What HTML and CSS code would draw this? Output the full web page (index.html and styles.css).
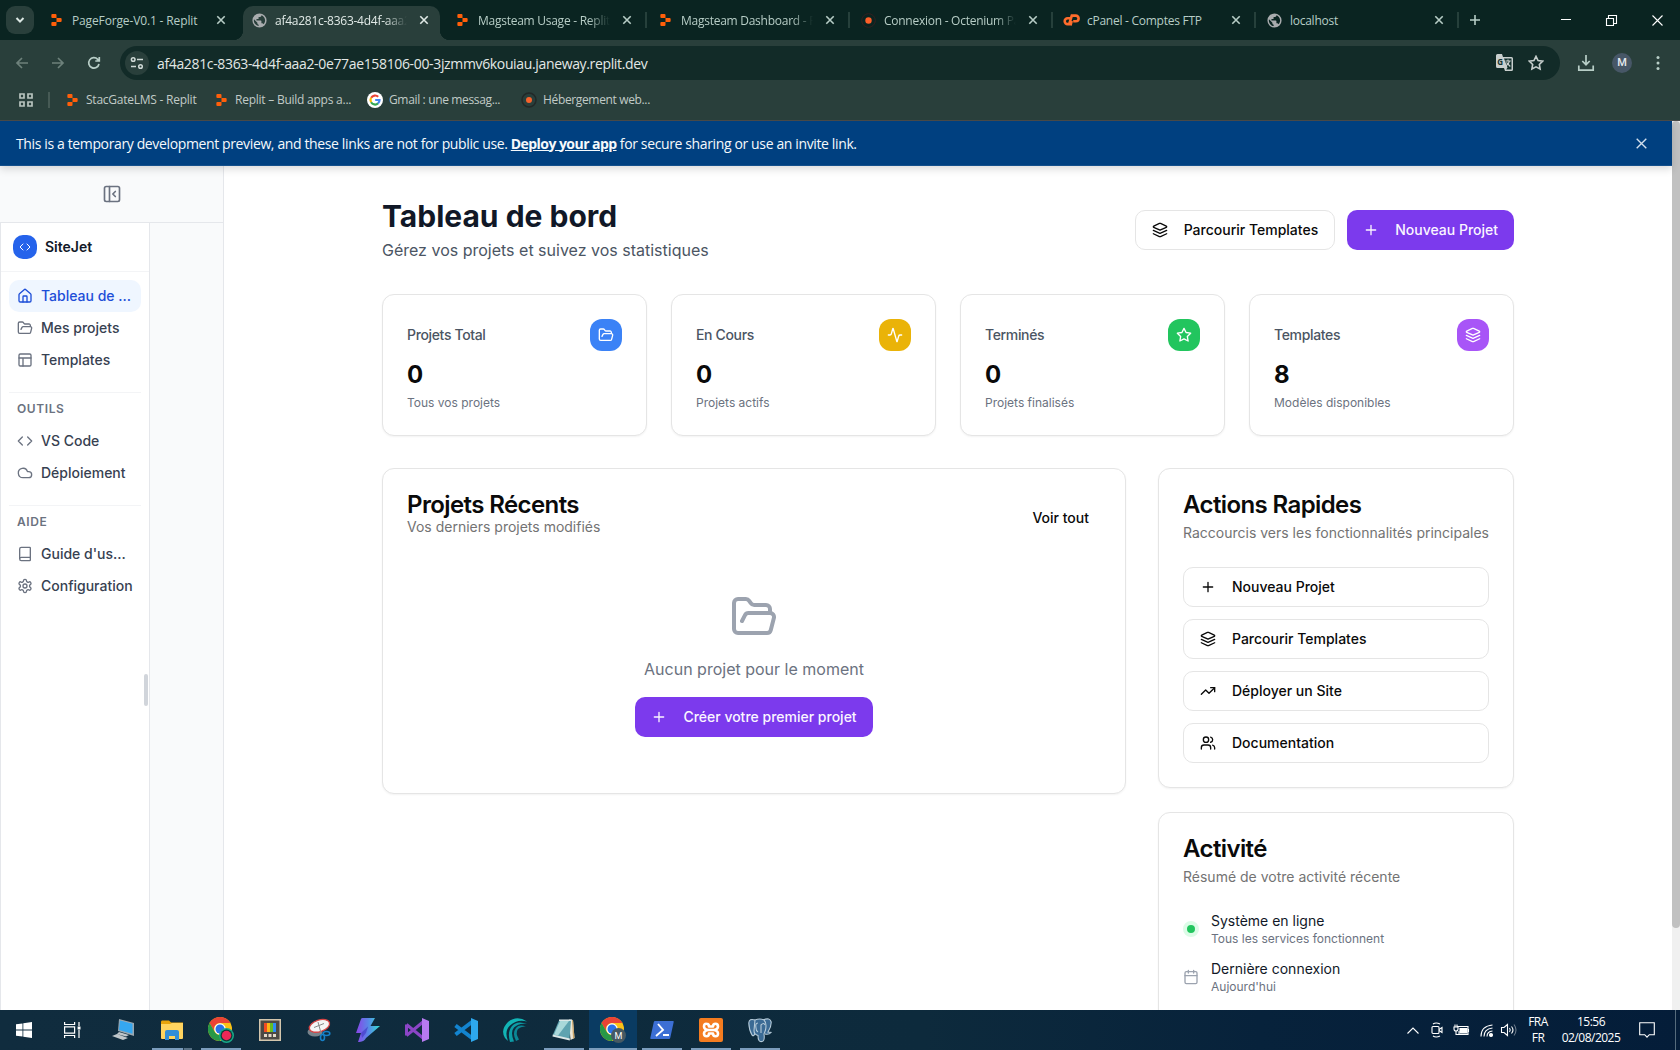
FILE: index.html
```html
<!DOCTYPE html>
<html lang="fr">
<head>
<meta charset="utf-8">
<title>SiteJet – Tableau de bord</title>
<link rel="stylesheet" href="styles.css">
</head>
<body>
<svg class="sprite" aria-hidden="true">
  <symbol id="replit" viewBox="0 0 12 14"><path fill="#ff5f0a" d="M1.2 0h3.6Q6 0 6 1.2V4.7H1.2Q0 4.700 0 3.500V1.200Q0 0 1.200 0zM6 4.700h4.800Q12 4.700 12 5.900V8.100Q12 9.300 10.800 9.300H6zM1.200 9.300H6v3.500Q6 14 4.800 14H1.200Q0 14 0 12.800v-2.300Q0 9.300 1.200 9.300z"/></symbol>
  <symbol id="globe" viewBox="0 0 24 24"><path fill="#a9acae" d="M12 2a10 10 0 1 0 0 20 10 10 0 0 0 0-20zm-1.200 17.900C7 19.300 4 16 4 12l.2-1.700L9 15v1c0 1.100.8 2 1.800 2zm6.800-2.500A2 2 0 0 0 15.700 16h-1v-3a1 1 0 0 0-1-1h-6v-2h2a1 1 0 0 0 1-1V7h2a2 2 0 0 0 2-2v-.4c3 1.200 5.200 4.100 5.200 7.400 0 2.100-.9 4-2.300 5.400z"/></symbol>
  <symbol id="x" viewBox="0 0 10 10"><path d="M1.300 1.300l7.400 7.400M8.700 1.300L1.300 8.700"/></symbol>
  <symbol id="plus" viewBox="0 0 24 24"><path d="M5 12h14M12 5v14"/></symbol>
  <symbol id="layers" viewBox="0 0 24 24"><path d="m12.830 2.180a2 2 0 0 0-1.660 0L2.600 6.080a1 1 0 0 0 0 1.830l8.580 3.910a2 2 0 0 0 1.660 0l8.580-3.900a1 1 0 0 0 0-1.830Z"/><path d="m22 17.650-9.170 4.160a2 2 0 0 1-1.660 0L2 17.650"/><path d="m22 12.650-9.170 4.160a2 2 0 0 1-1.660 0L2 12.650"/></symbol>
  <symbol id="folder" viewBox="0 0 24 24"><path d="m6 14 1.500-2.900A2 2 0 0 1 9.240 10H20a2 2 0 0 1 1.940 2.500l-1.540 6a2 2 0 0 1-1.950 1.500H4a2 2 0 0 1-2-2V5a2 2 0 0 1 2-2h3.900a2 2 0 0 1 1.690.9l.810 1.200a2 2 0 0 0 1.670.9H18a2 2 0 0 1 2 2v2"/></symbol>
  <symbol id="activity" viewBox="0 0 24 24"><path d="M22 12h-2.480a2 2 0 0 0-1.930 1.460l-2.350 8.360a.250.250 0 0 1-.480 0L9.240 2.180a.250.250 0 0 0-.480 0l-2.350 8.360A2 2 0 0 1 4.490 12H2"/></symbol>
  <symbol id="star" viewBox="0 0 24 24"><path d="M12 2l3.090 6.260L22 9.270l-5 4.870 1.180 6.880L12 17.770l-6.180 3.250L7 14.140 2 9.270l6.910-1.010z"/></symbol>
  <symbol id="trend" viewBox="0 0 24 24"><path d="M22 7l-8.500 8.500-5-5L2 17"/><path d="M16 7h6v6"/></symbol>
  <symbol id="users" viewBox="0 0 24 24"><path d="M16 21v-2a4 4 0 0 0-4-4H6a4 4 0 0 0-4 4v2"/><circle cx="9" cy="7" r="4"/><path d="M22 21v-2a4 4 0 0 0-3-3.870M16 3.130a4 4 0 0 1 0 7.750"/></symbol>
  <symbol id="calendar" viewBox="0 0 24 24"><path d="M8 2v4M16 2v4M3 10h18"/><rect x="3" y="4" width="18" height="18" rx="2"/></symbol>
  <symbol id="home" viewBox="0 0 24 24"><path d="M15 21v-8a1 1 0 0 0-1-1h-4a1 1 0 0 0-1 1v8"/><path d="M3 10a2 2 0 0 1 .709-1.528l7-5.999a2 2 0 0 1 2.582 0l7 5.999A2 2 0 0 1 21 10v9a2 2 0 0 1-2 2H5a2 2 0 0 1-2-2z"/></symbol>
  <symbol id="layout" viewBox="0 0 24 24"><rect x="3" y="3" width="18" height="18" rx="2"/><path d="M3 9h18M9 21V9"/></symbol>
  <symbol id="code" viewBox="0 0 24 24"><path d="m16 18 6-6-6-6M8 6l-6 6 6 6"/></symbol>
  <symbol id="cloud" viewBox="0 0 24 24"><path d="M17.500 19H9a7 7 0 1 1 6.710-9h1.790a4.500 4.500 0 1 1 0 9Z"/></symbol>
  <symbol id="book" viewBox="0 0 24 24"><path d="M4 19.500v-15A2.500 2.500 0 0 1 6.500 2H19a1 1 0 0 1 1 1v18a1 1 0 0 1-1 1H6.500a1 1 0 0 1 0-5H20"/></symbol>
  <symbol id="gear" viewBox="0 0 24 24"><path d="M12.220 2h-.440a2 2 0 0 0-2 2v.180a2 2 0 0 1-1 1.730l-.430.250a2 2 0 0 1-2 0l-.150-.080a2 2 0 0 0-2.730.730l-.220.380a2 2 0 0 0 .730 2.730l.150.100a2 2 0 0 1 1 1.720v.510a2 2 0 0 1-1 1.740l-.150.090a2 2 0 0 0-.730 2.730l.220.380a2 2 0 0 0 2.730.730l.150-.080a2 2 0 0 1 2 0l.430.250a2 2 0 0 1 1 1.730V20a2 2 0 0 0 2 2h.440a2 2 0 0 0 2-2v-.180a2 2 0 0 1 1-1.730l.430-.250a2 2 0 0 1 2 0l.150.080a2 2 0 0 0 2.730-.730l.220-.390a2 2 0 0 0-.730-2.730l-.150-.080a2 2 0 0 1-1-1.740v-.500a2 2 0 0 1 1-1.740l.150-.090a2 2 0 0 0 .730-2.730l-.220-.380a2 2 0 0 0-2.730-.730l-.150.080a2 2 0 0 1-2 0l-.430-.250a2 2 0 0 1-1-1.730V4a2 2 0 0 0-2-2z"/><circle cx="12" cy="12" r="3"/></symbol>
  <symbol id="panel" viewBox="0 0 24 24"><rect x="3" y="3" width="18" height="18" rx="2"/><path d="M9 3v18M16 15l-3-3 3-3"/></symbol>
  <symbol id="chrome" viewBox="0 0 24 24"><circle cx="12" cy="12" r="12" fill="#fbc116"/><path fill="#ea4335" d="M1.600 6A12 12 0 0 1 22.400 6H12a6 6 0 0 0-5.200 9z"/><path fill="#279847" d="M1.600 6A12 12 0 0 0 12 24l5.200-9A6 6 0 0 1 6.800 15z"/><circle cx="12" cy="12" r="5.700" fill="#fff"/><circle cx="12" cy="12" r="4.500" fill="#2a72e8"/></symbol>
</svg>

<header class="chrome">
  <div class="tabs">
    <button class="tab-search"><svg width="10" height="10" viewBox="0 0 10 10"><path d="M1.500 3l3.500 3.600L8.500 3"/></svg></button>
    <div class="tab"><svg class="fav" width="10" height="12"><use href="#replit"/></svg><span class="tab-text first">PageForge-V0.1 - Replit</span><svg class="close"><use href="#x"/></svg></div>
    <div class="tab active"><svg class="fav" width="17" height="17"><use href="#globe"/></svg><span class="tab-text fade">af4a281c-8363-4d4f-aaa2</span><svg class="close"><use href="#x"/></svg></div>
    <div class="tab"><svg class="fav" width="10" height="12"><use href="#replit"/></svg><span class="tab-text fade">Magsteam Usage - Replit</span><svg class="close"><use href="#x"/></svg></div>
    <div class="tab sep"><svg class="fav" width="10" height="12"><use href="#replit"/></svg><span class="tab-text fade">Magsteam Dashboard - R</span><svg class="close"><use href="#x"/></svg></div>
    <div class="tab sep"><svg class="fav" width="15" height="15" viewBox="0 0 15 15"><circle cx="7.500" cy="7.500" r="6.800" fill="none" stroke="#32201f"/><circle cx="7.500" cy="7.500" r="3.200" fill="#ff5f28"/></svg><span class="tab-text fade">Connexion - Octenium Pa</span><svg class="close"><use href="#x"/></svg></div>
    <div class="tab sep"><svg class="fav" width="17" height="13" viewBox="0 0 17 13"><path fill="none" stroke="#ff6c2c" stroke-width="2.600" d="M7.500 4.300H4.600a2.900 2.900 0 0 0 0 5.800H6.200L8.800 1.600h4a2.700 2.700 0 0 1 0 5.600h-2.600M8.700 7L7.500 11.500"/></svg><span class="tab-text">cPanel - Comptes FTP</span><svg class="close"><use href="#x"/></svg></div>
    <div class="tab sep"><svg class="fav" width="17" height="17"><use href="#globe"/></svg><span class="tab-text">localhost</span><svg class="close"><use href="#x"/></svg></div>
    <div class="new-tab"><svg width="10" height="10" viewBox="0 0 10 10"><path d="M0 5h10M5 0v10"/></svg></div>
    <div class="win">
      <svg width="10" height="12" viewBox="0 0 10 12"><path d="M0 5.500h10"/></svg>
      <svg width="11" height="11" viewBox="0 0 11 11"><path d="M.5 3.500h7v7h-7zM2.500 3.500v-3h8v8h-3"/></svg>
      <svg width="11" height="11" viewBox="0 0 11 11"><path d="M.5.5l10 10M10.500.5L.5 10.500"/></svg>
    </div>
  </div>
  <div class="toolbar">
    <svg class="dim" viewBox="0 0 16 16"><path d="M14 8H3M8 3L3 8l5 5"/></svg>
    <svg class="dim" viewBox="0 0 16 16"><path d="M2 8h11M8 3l5 5-5 5"/></svg>
    <svg viewBox="0 0 16 16"><path d="M13 9a5.200 5.200 0 1 1-1.300-4.700L13.300 6M13.300 2v4h-4"/></svg>
    <div class="omnibox">
      <span class="site-info"><svg width="14" height="14" viewBox="0 0 14 14"><circle cx="3.200" cy="3.500" r="1.800"/><path d="M7 3.500h6M1 10.500h5"/><circle cx="10.500" cy="10.500" r="1.800"/></svg></span>
      <span class="url">af4a281c-8363-4d4f-aaa2-0e77ae158106-00-3jzmmv6kouiau.janeway.replit.dev</span>
      <svg class="translate" width="17" height="18" viewBox="0 0 17 18"><path fill="#c9cfce" d="M1.500 0H6l1 3h8.500Q17 3 17 4.500v11q0 1.500-1.500 1.500H9l-1-3H1.500Q0 14 0 12.500v-11Q0 0 1.500 0z"/><path fill="#13302c" d="M8 4.500h7.500v11h-5.300l1.300-2z"/><text x="1.300" y="10.500" class="gletter">G</text><path d="M9.500 7h5.300M12 5.500V7M13.500 7q-.8 3-3.500 5M10.500 8.500l3.800 4" stroke="#c9cfce" stroke-width="1.100"/></svg>
      <svg class="bookmark" width="16" height="16" viewBox="0 0 24 24"><use href="#star"/></svg>
    </div>
    <svg class="download" viewBox="0 0 16 16"><path d="M8 0v9M4.300 6L8 9.700 11.700 6M.8 10.500v4.700h14.400v-4.700"/></svg>
    <span class="avatar">M</span>
    <svg class="dots" viewBox="0 0 4 16"><circle cx="2" cy="2.500" r="1.500"/><circle cx="2" cy="8" r="1.500"/><circle cx="2" cy="13.500" r="1.500"/></svg>
  </div>
  <div class="bookmarks">
    <svg class="apps" width="14" height="14" viewBox="0 0 14 14"><path d="M1 1h4v4H1zM9 1h4v4H9zM1 9h4v4H1zM9 9h4v4H9z"/></svg>
    <i class="vline"></i>
    <div class="bm b1"><svg width="11" height="12"><use href="#replit"/></svg><span>StacGateLMS - Replit</span></div>
    <div class="bm b2"><svg width="11" height="12"><use href="#replit"/></svg><span>Replit – Build apps a...</span></div>
    <div class="bm b3"><svg width="16" height="16" viewBox="0 0 16 16"><circle cx="8" cy="8" r="8" fill="#fff"/><g fill="none" stroke-width="2.200"><path stroke="#ea4335" d="M4.200 5.800A4.500 4.500 0 0 1 11.200 4.700"/><path stroke="#fbbc05" d="M4.100 10.200a4.500 4.500 0 0 1 0-4.400"/><path stroke="#34a853" d="M4.100 10.200a4.500 4.500 0 0 0 6.900 1.200"/><path stroke="#4285f4" d="M8.200 8h4.300a4.500 4.500 0 0 1-1.500 3.400"/></g></svg><span>Gmail : une messag...</span></div>
    <div class="bm b4"><svg width="16" height="16" viewBox="0 0 16 16"><circle cx="8" cy="8" r="7" fill="none" stroke="#222827" stroke-width="1.500"/><circle cx="8" cy="8" r="3" fill="#f8622c"/></svg><span>Hébergement web...</span></div>
  </div>
</header>

<div class="viewport">
  <div class="page">
    <div class="banner"><p>This is a temporary development preview, and these links are not for public use. <a>Deploy your app</a> for secure sharing or use an invite link.</p><svg><use href="#x"/></svg></div>
    <div class="app">
      <aside class="side">
        <div class="side-top"><svg class="ic" width="20" height="20"><use href="#panel"/></svg></div>
        <div class="side-body">
          <nav class="nav">
            <div class="brand"><span class="logo"><svg class="ic" width="12" height="12"><use href="#code"/></svg></span>SiteJet</div>
            <div class="group">
              <a class="item on"><svg class="ic"><use href="#home"/></svg><span>Tableau de ...</span></a>
              <a class="item"><svg class="ic"><use href="#folder"/></svg><span>Mes projets</span></a>
              <a class="item"><svg class="ic"><use href="#layout"/></svg><span>Templates</span></a>
            </div>
            <div class="group ruled">
              <h3>OUTILS</h3>
              <a class="item"><svg class="ic"><use href="#code"/></svg><span>VS Code</span></a>
              <a class="item"><svg class="ic"><use href="#cloud"/></svg><span>Déploiement</span></a>
            </div>
            <div class="group ruled">
              <h3>AIDE</h3>
              <a class="item"><svg class="ic"><use href="#book"/></svg><span>Guide d'us...</span></a>
              <a class="item"><svg class="ic"><use href="#gear"/></svg><span>Configuration</span></a>
            </div>
            <i class="handle"></i>
          </nav>
        </div>
      </aside>
      <main class="main">
        <div class="head">
          <div><h1>Tableau de bord</h1><p>Gérez vos projets et suivez vos statistiques</p></div>
          <div class="actions">
            <button class="btn outline"><svg class="ic"><use href="#layers"/></svg>Parcourir Templates</button>
            <button class="btn primary"><svg class="ic"><use href="#plus"/></svg>Nouveau Projet</button>
          </div>
        </div>
        <div class="stats">
          <section class="card stat"><div class="stat-top">Projets Total<span class="chip blue"><svg class="ic"><use href="#folder"/></svg></span></div><strong>0</strong><small>Tous vos projets</small></section>
          <section class="card stat"><div class="stat-top">En Cours<span class="chip yellow"><svg class="ic"><use href="#activity"/></svg></span></div><strong>0</strong><small>Projets actifs</small></section>
          <section class="card stat"><div class="stat-top">Terminés<span class="chip green"><svg class="ic"><use href="#star"/></svg></span></div><strong>0</strong><small>Projets finalisés</small></section>
          <section class="card stat"><div class="stat-top">Templates<span class="chip purple"><svg class="ic"><use href="#layers"/></svg></span></div><strong>8</strong><small>Modèles disponibles</small></section>
        </div>
        <div class="columns">
          <section class="card">
            <div class="recent-head"><div><h2>Projets Récents</h2><p class="desc">Vos derniers projets modifiés</p></div><button class="ghost">Voir tout</button></div>
            <div class="empty"><svg class="ic"><use href="#folder"/></svg><p>Aucun projet pour le moment</p><button class="btn primary"><svg class="ic"><use href="#plus"/></svg>Créer votre premier projet</button></div>
          </section>
          <div class="right">
            <section class="card">
              <h2>Actions Rapides</h2><p class="desc spaced">Raccourcis vers les fonctionnalités principales</p>
              <div class="quick">
                <button class="btn outline"><svg class="ic"><use href="#plus"/></svg>Nouveau Projet</button>
                <button class="btn outline"><svg class="ic"><use href="#layers"/></svg>Parcourir Templates</button>
                <button class="btn outline"><svg class="ic"><use href="#trend"/></svg>Déployer un Site</button>
                <button class="btn outline"><svg class="ic"><use href="#users"/></svg>Documentation</button>
              </div>
            </section>
            <section class="card">
              <h2>Activité</h2><p class="desc spaced">Résumé de votre activité récente</p>
              <div class="events">
                <div class="event"><i class="online"></i><div><p>Système en ligne</p><small>Tous les services fonctionnent</small></div></div>
                <div class="event"><svg class="ic"><use href="#calendar"/></svg><div><p>Dernière connexion</p><small>Aujourd'hui</small></div></div>
              </div>
            </section>
          </div>
        </div>
      </main>
    </div>
  </div>
  <div class="scroll"><i></i></div>
</div>

<footer class="taskbar">
  <div class="launch">
    <span class="app-icon start"><svg viewBox="0 0 16 16" width="16" height="16" fill="#fff"><path d="M0 2.300L6.500 1.400v6.200H0zM7.300 1.300L16 0v7.600H7.300zM0 8.400h6.500v6.200L0 13.700zM7.300 8.400H16V16l-8.700-1.300z"/></svg></span>
    <span class="app-icon"><svg viewBox="0 0 17 16" width="17" height="16" fill="none" stroke="#fff" stroke-width="1.200"><path d="M.6 0v2.500h10V0M.6 4.800h10v6.400H.6zM.6 16v-2.500h10V16M15 0v4M15 8v8"/><path fill="#fff" stroke="none" d="M13.600 4.500h2.900v3h-2.900z"/></svg></span>
    <span class="app-icon"><svg viewBox="0 0 24 24" width="24" height="24"><path fill="#9aa7b0" d="M8 1l15 4v13L7 13z"/><path fill="#35a7f0" d="M9 2.500l12.500 3.300v10L8 12z"/><path fill="#bfc6ca" d="M8 14l10 3-3 1.500L6 16zM1 18l5-2 11 4-5 2z"/></svg></span>
    <span class="app-icon open folder-app"><svg viewBox="0 0 22 20" width="22" height="20"><path fill="#e8a40c" d="M0 2q0-1.500 1-1.500h7l2 2H22V18H0z"/><path fill="#ffd45f" d="M0 4h9l2-1h11v15q0 1-1 1H1q-1 0-1-1z"/><path fill="#318ed8" d="M4 20v-8q0-2 2-2h10q2 0 2 2v8h-4v-4H8v4z"/></svg></span>
    <span class="app-icon open"><svg viewBox="0 0 26 26" width="26" height="26"><use href="#chrome" width="24" height="24"/><circle cx="18.500" cy="18.500" r="7.500" fill="#17a889"/><circle cx="18.500" cy="18.500" r="6" fill="#113b36"/><circle cx="18.500" cy="18.500" r="4.700" fill="#ee2857"/></svg></span>
    <span class="app-icon"><svg viewBox="0 0 22 22" width="22" height="22"><path fill="#d4c6ad" d="M0 0h22v22H0z"/><path fill="#4d4944" d="M1.500 1.500h19v19h-19z"/><path fill="#f04a24" d="M5 4h3v9H5z"/><path fill="#fbb516" d="M8 4h3v9H8z"/><path fill="#66bc22" d="M11 4h3v9h-3z"/><path fill="#2d8df5" d="M14 4h3v9h-3z"/><path fill="#e4d9c8" d="M5 15h3v3H5zM9.500 15h3v3h-3zM14 15h3v3h-3z"/></svg></span>
    <span class="app-icon"><svg viewBox="0 0 24 24" width="24" height="24"><ellipse cx="8" cy="14" rx="7.500" ry="4.500" fill="#77838b"/><ellipse cx="12.500" cy="8" rx="10.500" ry="5.800" transform="rotate(-18 12 8)" fill="#f5f5f5" stroke="#d64545" stroke-width="1.300"/><path d="M7 9.500l10-4M11 4l3 11" stroke="#888"/><g fill="none" stroke="#1680c8" stroke-width="1.600"><ellipse cx="19.500" cy="15.500" rx="3.300" ry="2"/><ellipse cx="15.500" cy="19.500" rx="2" ry="3"/></g></svg></span>
    <span class="app-icon"><svg viewBox="0 0 24 24" width="24" height="24"><defs><linearGradient id="bolt" x2="1"><stop stop-color="#8a43e6"/><stop offset=".5" stop-color="#5a86e8"/><stop offset="1" stop-color="#33e0d2"/></linearGradient></defs><path fill="url(#bolt)" d="M5 1q.4-1 1.500-1H19l-4.500 8H24L10 20q-1.500 3.500-6.500 4H2l3-9H0z"/><path d="M5 15l7-6.500L10 15l-4 5z" fill="#3a2fc0" opacity=".55"/></svg></span>
    <span class="app-icon"><svg viewBox="0 0 24 24" width="24" height="24"><path d="M1.500 6.500v11M1.500 6.500L18 20M1.500 17.500L18 4" stroke="#8b45c7" stroke-width="3" fill="none" stroke-linejoin="round"/><path fill="#b77af0" d="M17 0l7 3v18l-7 3z"/></svg></span>
    <span class="app-icon"><svg viewBox="0 0 24 24" width="24" height="24"><path d="M1.500 7.500L18 20M1.500 16.500L18 4" stroke="#1384cf" stroke-width="4" fill="none"/><path fill="#2da8ee" d="M17 0l7 3v18l-7 3z"/></svg></span>
    <span class="app-icon"><svg viewBox="0 0 24 24" width="24" height="24"><path fill="#12b5b6" d="M24 3.500Q14-3 5 4-3 12 2 20l3 3Q1 13 7 7.500 14 1 24 3.500z"/><path fill="#0d9ca6" d="M24 6Q14 2 9 8q-5 6-2 16l4-.5Q7 14 11 9.500 16 4.500 24 6z"/><path fill="#0b8795" d="M23 8.500Q16 6 13 10q-4 5 0 13l3-1.500Q12 15 15 11q3-3 8-2.500z"/></svg></span>
    <span class="app-icon open"><svg viewBox="0 0 24 24" width="24" height="24"><path fill="#ece6d6" d="M17 1.500l4 .5 1.500 18-4 2z"/><path fill="#c9a468" d="M20 2h1l1.500 18-1.500.8z"/><path fill="#5fa3b0" d="M7 2.500h12l-1.500 19L.8 17z"/><path fill="#a9d8da" d="M8 3h9L6 17.500l-4-1z"/><path fill="#dce7e7" d="M.8 16.500l17 4v2L.5 18.500zM7 1.500h13v1.500H7z"/></svg></span>
    <span class="app-icon open current"><svg viewBox="0 0 26 26" width="26" height="26"><use href="#chrome" width="24" height="24"/><circle cx="18.500" cy="18.500" r="7.500" fill="#465963"/><text x="18.500" y="22" class="m">M</text></svg></span>
    <span class="app-icon open"><svg viewBox="0 0 24 20" width="24" height="20"><path fill="#3c6fd5" d="M5 1h18q1 0 .7 1l-3.500 16q-.2 1-1.200 1H1q-1 0-.7-1L3.800 2Q4 1 5 1z"/><path d="M8 4l5 6-7 6M13 15h6" fill="none" stroke="#fff" stroke-width="1.900"/></svg></span>
    <span class="app-icon open"><svg viewBox="0 0 24 24" width="24" height="24"><rect width="24" height="24" rx="2" fill="#f47c20"/><path d="M9.500 12h5M9.500 12Q5 11.500 5 8.500T7.500 5.700Q10 5.700 10 8.500h4q0-2.800 2.500-2.800T19 8.500 14.500 12q4.500.5 4.500 3.500t-2.500 2.800-2.500-2.800h-4q0 2.800-2.500 2.800T5 15.500 9.500 12z" fill="none" stroke="#fff" stroke-width="2.600" stroke-linejoin="round"/></svg></span>
    <span class="app-icon open"><svg viewBox="0 0 24 24" width="24" height="24" fill="#3b6b95" stroke="#b6cbd9" stroke-width="1.100"><path d="M7 2Q1 0 .8 5q.2 7 3.200 12 2 2 3-2l2-1M15 2q7-3 8.200 2 .2 5-3.200 10l3 .5q-2 2.500-6 1.500"/><path d="M7 2q5-2 9 0 3 3 1.500 10L16 16q1 7-2 7.500-4 1-4-6-4-1-4-5z"/><path d="M13 15V7q3-3 4 0M10 5q-3 0-2 5 0 3 2 4" fill="none"/></svg></span>
  </div>
  <div class="tray">
    <svg class="t1" width="12" height="7" viewBox="0 0 12 7"><path d="M.5 6.500L6 1l5.500 5.500"/></svg>
    <svg class="t2" width="12" height="16" viewBox="0 0 12 16"><rect x="1" y="4.500" width="7" height="7" rx="1"/><path d="M8 7.500l3-2v5l-3-2M2 2q3-2 7 0M2 14q3 2 7 0"/></svg>
    <svg class="t3" width="17" height="14" viewBox="0 0 17 14"><path d="M4.500 3.500h10.500v8h-9V8M15.500 6v3M1 4h4v2q0 2-2 2t-2-2zM2 1.500V4M4 1.500V4M3 8v3.500h3"/><path d="M7 5.500h7v4.500H7z" fill="#fff"/></svg>
    <svg class="t4" width="13" height="13" viewBox="0 0 13 13"><path d="M1 12.500Q1 2 12.500 1M4 12.500q0-7.500 8.500-8.500M7 12.500q0-5 5.500-5.500"/><circle cx="11" cy="11" r="1.500" fill="#fff"/></svg>
    <svg class="t5" width="16" height="14" viewBox="0 0 16 14"><path d="M.5 4.500h2.500l3.500-3v11L3 9.500H.5zM8.500 5q1.500 2 0 4M10.500 3.500q3 3.500 0 7"/><path d="M13 1.500q4 5.500 0 11" opacity=".4"/></svg>
    <div class="lang">FRA<br>FR</div>
    <div class="clock">15:56<br>02/08/2025</div>
    <svg class="note" width="16" height="16" viewBox="0 0 16 16"><path d="M.7.7h14.600v12h-5L8 15.200l-2.300-2.500h-5z"/></svg>
    <i class="desk"></i>
  </div>
</footer>
</body>
</html>
```
FILE: styles.css
```css
* { box-sizing: border-box; }
body { margin: 0; width: 1680px; height: 1050px; overflow: hidden; display: flex; flex-direction: column; font-family: Inter, sans-serif; background: #fff; color: #0a0a0a; }
h1, h2, h3, p { margin: 0; }
button { font: inherit; margin: 0; border: 0; background: none; }
svg { flex: none; display: block; overflow: visible; }
.sprite { position: absolute; width: 0; height: 0; }
.ic { width: 16px; height: 16px; fill: none; stroke: currentColor; stroke-width: 2; stroke-linecap: round; stroke-linejoin: round; }

/* browser frame */
.chrome { height: 121px; flex: none; background: #293f3b; border-bottom: 1px solid #484947; font-family: "Open Sans", sans-serif; }
.tabs { height: 40px; background: #0a2421; display: flex; padding-left: 6px; }
.tab-search { width: 28px; height: 28px; margin: 6px 3px 0 0; border-radius: 9px; background: #293f3b; padding: 9px; flex: none; }
.tab-search path { fill: none; stroke: #dce8e4; stroke-width: 2; }
.tab { position: relative; flex: none; width: 203px; height: 40px; display: flex; align-items: center; color: #b7cdc6; font-size: 12px; padding-left: 11px; }
.tab .fav { width: 17px; margin-right: 7px; }
.tab-text { width: 134px; overflow: hidden; white-space: nowrap; line-height: 20px; letter-spacing: -.26px; padding-top: 1px; }
.first { letter-spacing: -.14px; }
.fade { width: 132px; margin-right: 2px; mask-image: linear-gradient(90deg, #000 84%, transparent); }
.close { width: 10px; height: 10px; margin-left: 10px; stroke: #b7cdc6; stroke-width: 1.6; }
.sep::after { content: ""; position: absolute; left: -1px; top: 12px; width: 2px; height: 16px; background: #26403b; }
.active { isolation: isolate; color: #e0e9e6; }
.active::before { content: ""; position: absolute; z-index: -1; left: 3px; top: 6px; width: 197px; height: 34px; background: #293f3b; border-radius: 10px 10px 0 0; }
.active::after { content: ""; position: absolute; z-index: -1; left: -7px; right: -7px; bottom: 0; height: 10px; background: radial-gradient(circle at 0 0, transparent 10px, #293f3b 10.500px) left / 10px 10px no-repeat, radial-gradient(circle at 100% 0, transparent 10px, #293f3b 10.500px) 207px 0 / 10px 10px no-repeat; }
.active .close { stroke: #e0e9e6; }
.new-tab { width: 24px; padding: 15px 0 0 12px; position: relative; }
.new-tab::before { content: ""; position: absolute; left: -1px; top: 12px; width: 2px; height: 16px; background: #26403b; }
.new-tab path { stroke: #b7cdc6; stroke-width: 1.6; }
.win { margin-left: auto; margin-right: 17px; display: flex; align-items: center; gap: 35px; fill: none; stroke: #fff; stroke-width: 1.100; }
.win svg:first-child { stroke-width: 1; }
.toolbar { height: 46px; display: flex; align-items: center; padding-left: 14px; }
.toolbar > svg { width: 16px; height: 16px; margin-right: 20px; fill: none; stroke: #b8cec7; stroke-width: 1.700; }
.toolbar > .dim { stroke: #6d817b; }
.toolbar > svg:nth-child(3) { margin-right: 18px; }
.omnibox { width: 1440px; height: 34px; background: #122b28; border-radius: 17px; display: flex; align-items: center; padding-left: 5px; flex: none; }
.site-info { width: 24px; height: 24px; border-radius: 50%; background: #293f3b; padding: 5px; fill: none; stroke: #cfd9d6; stroke-width: 1.500; }
.url { margin-left: 8px; color: #e3e8e6; font-size: 14px; line-height: 20px; letter-spacing: -.35px; white-space: nowrap; width: 1339px; padding-top: 1px; }
.gletter { font: bold 8px "Open Sans", sans-serif; fill: #13302c; stroke: none; }
.bookmark { margin-left: 15px; fill: none; stroke: #c5cdcb; stroke-width: 2.400; }
.toolbar > .download { margin: 0 18px; }
.avatar { width: 20px; height: 20px; border-radius: 50%; background: #475767; color: #e6eaee; font: 500 11px/20px Roboto, sans-serif; text-align: center; margin-right: 24px; }
.toolbar > .dots { width: 4px; margin: 0; fill: #b8cec7; stroke: none; }
.bookmarks { height: 28px; display: flex; align-items: center; padding-left: 19px; }
.apps { fill: none; stroke: #b8c4bf; stroke-width: 1.700; }
.vline { width: 2px; height: 16px; background: #465a55; margin: 0 17px 0 15px; }
.bm { display: flex; align-items: center; color: #c1cbc7; font-size: 12px; line-height: 16px; letter-spacing: -.35px; white-space: nowrap; }
.bm span { padding-left: 8px; }
.b1 { width: 149px; letter-spacing: -.24px; }
.b2 { width: 151px; letter-spacing: -.24px; }
.b3 { width: 154px; }
.b3 span, .b4 span { padding-left: 6px; }

/* page viewport */
.viewport { flex: 1; min-height: 0; display: flex; overflow: hidden; }
.page { width: 1672px; display: flex; flex-direction: column; }
.scroll { width: 8px; background: #f0f0f0; }
.scroll i { display: block; height: 807px; background: #c1c1c1; border-radius: 4px; }
.banner { position: relative; z-index: 1; height: 45px; flex: none; background: #004080; border-bottom: 1px solid #14508c; color: #f5f9fc; display: flex; align-items: center; justify-content: space-between; padding: 0 24px 0 16px; font: 14px/20px "Open Sans", sans-serif; box-shadow: 0 3px 8px rgba(0,0,0,.15); }
.banner p { letter-spacing: -.37px; white-space: nowrap; font-weight: 500; padding-top: 1px; }
.banner a { font-weight: 700; text-decoration: underline; letter-spacing: -.55px; }
.banner svg { width: 13px; height: 13px; stroke: #d3e0ed; stroke-width: 1.050; }
.app { flex: 1; min-height: 0; display: flex; }
.side { width: 224px; flex: none; border-right: 1px solid #e5e7eb; background: #f9fafb; display: flex; flex-direction: column; }
.side-top { height: 57px; border-bottom: 1px solid #e5e7eb; color: #6b7280; display: flex; align-items: center; justify-content: center; flex: none; }
.side-top .ic { width: 20px; height: 20px; }
.side-body { flex: 1; display: flex; }
.nav { position: relative; width: 150px; background: #fff; border: solid #e5e7eb; border-width: 0 1px; }
.brand { height: 49px; border-bottom: 1px solid #f3f4f6; display: flex; align-items: center; gap: 8px; padding-left: 12px; font-size: 14px; line-height: 20px; font-weight: 600; color: #111827; }
.logo { width: 24px; height: 24px; border-radius: 10px; background: #2563eb; color: #fff; padding: 6px; }
.logo .ic { width: 12px; height: 12px; }
.group { padding: 8px 8px 0; }
.item { height: 32px; display: flex; align-items: center; gap: 8px; padding: 0 8px; font-size: 14px; line-height: 20px; font-weight: 450; color: #374151; border-radius: 10px; white-space: nowrap; }
.item .ic { color: #6b7280; }
.on, .on .ic { color: #1d4ed8; }
.on { background: #eff6ff; }
.ruled { padding-top: 0; margin-top: 16px; }
.ruled h3 { border-top: 1px solid #f3f4f6; padding: 8px; height: 33px; font-size: 12px; line-height: 16px; font-weight: 600; letter-spacing: .6px; color: #6b7280; }
.handle { position: absolute; left: 143px; top: 451px; width: 4px; height: 32px; border-radius: 2px; background: #d1d5db; }

.main { flex: 1; padding: 32px 0 0 158px; }
.main > * { width: 1132px; }
.head { display: flex; justify-content: space-between; align-items: center; height: 64px; }
h1 { font-size: 30px; line-height: 36px; font-weight: 700; color: #111827; }
.head p { font-size: 16px; line-height: 24px; margin-top: 4px; color: #4b5563; }
.actions { display: flex; gap: 12px; }
.btn { height: 40px; display: inline-flex; align-items: center; gap: 16px; padding: 0 16px; border-radius: 10px; font-size: 14px; line-height: 20px; font-weight: 500; white-space: nowrap; color: #0a0a0a; }
.outline { border: 1px solid #e5e5e5; background: #fff; }
.primary { background: #7c3aed; color: #faf5ff; }
.card { border: 1px solid #e5e5e5; border-radius: 12px; padding: 24px; background: #fff; box-shadow: 0 1px 2px rgba(0,0,0,.05); }
.stats { display: grid; grid-template-columns: repeat(4, 265px); gap: 24px; margin-top: 32px; }
.stat { height: 142px; display: flex; flex-direction: column; }
.stat-top { display: flex; justify-content: space-between; align-items: center; height: 32px; font-size: 14px; line-height: 20px; font-weight: 500; letter-spacing: -.35px; color: #4b5563; }
.chip { width: 32px; height: 32px; padding: 8px; border-radius: 12px; color: #fff; }
.blue { background: #3b82f6; } .yellow { background: #eab308; } .green { background: #22c55e; } .purple { background: #a855f7; }
.stat strong { font-size: 24px; line-height: 32px; margin-top: 8px; }
.stat small { font-size: 12px; line-height: 16px; margin-top: 4px; color: #6b7280; }
.columns { display: grid; grid-template-columns: 744px 356px; gap: 32px; align-items: start; margin-top: 32px; }
h2 { font-size: 24px; line-height: 24px; font-weight: 600; letter-spacing: -.6px; }
.desc { font-size: 14px; line-height: 20px; color: #737373; }
.spaced { margin-top: 6px; }
.recent-head { display: flex; justify-content: space-between; align-items: center; height: 44px; }
.ghost { padding: 0 12px; margin-top: 6px; font-size: 14px; line-height: 20px; font-weight: 500; height: 36px; color: #0a0a0a; }
.empty { padding: 56px 0 32px; display: flex; flex-direction: column; align-items: center; }
.empty > .ic { width: 48px; height: 48px; color: #9ca3af; }
.empty p { margin: 16px 0; font-size: 16px; line-height: 24px; color: #6b7280; }
.right { display: grid; gap: 24px; }
.quick { display: grid; gap: 12px; margin-top: 24px; }
.events { display: grid; gap: 12px; margin-top: 24px; height: 160px; align-content: start; }
.event { display: flex; align-items: center; gap: 12px; color: #9ca3af; }
.event p { font-size: 14px; line-height: 20px; color: #111827; }
.event small { display: block; font-size: 12px; line-height: 16px; color: #6b7280; }
.online { width: 16px; height: 16px; border: 4px solid #dcfce7; border-radius: 50%; background: #22c55e; }

/* taskbar */
.taskbar { position: relative; z-index: 2; height: 40px; flex: none; display: flex; justify-content: space-between; background: linear-gradient(90deg, #102c3e, #0d2a3c 55%, #07223b 75%, #041d39); }
.launch { display: flex; }
.app-icon { width: 49px; height: 40px; display: flex; align-items: center; justify-content: center; position: relative; }
.start { width: 48px; }
.start + .app-icon { width: 48px; margin-right: 2px; }
.open::after { content: ""; position: absolute; left: 5px; right: 4px; bottom: 0; height: 2px; background: #7b9cbc; }
.current { background: #0a3b62; width: 48px; margin: 0 0 0 1px; }
.current::after { left: 0; right: 0; }
.folder-app::after { background: linear-gradient(90deg, #7b9cbc 31px, #213c50 31px 32px, #587287 32px); }
.m { font: 9px Roboto, sans-serif; fill: #fff; text-anchor: middle; }
.tray { display: flex; align-items: center; color: #fff; font: 12px/16px "Open Sans", sans-serif; text-align: center; letter-spacing: -.5px; }
.tray svg { fill: none; stroke: #fff; stroke-width: 1.100; }
.t1 { margin-right: 12px; } .t2 { margin-right: 10px; } .t3 { margin-right: 10px; } .t4 { margin-right: 8px; } .t5 { margin-right: 8px; }
.lang { width: 26px; } .clock { width: 62px; margin: 0 17px 0 9px; }
.desk { width: 1px; height: 40px; background: #556b7c; margin: 0 4px 0 20px; }
```
